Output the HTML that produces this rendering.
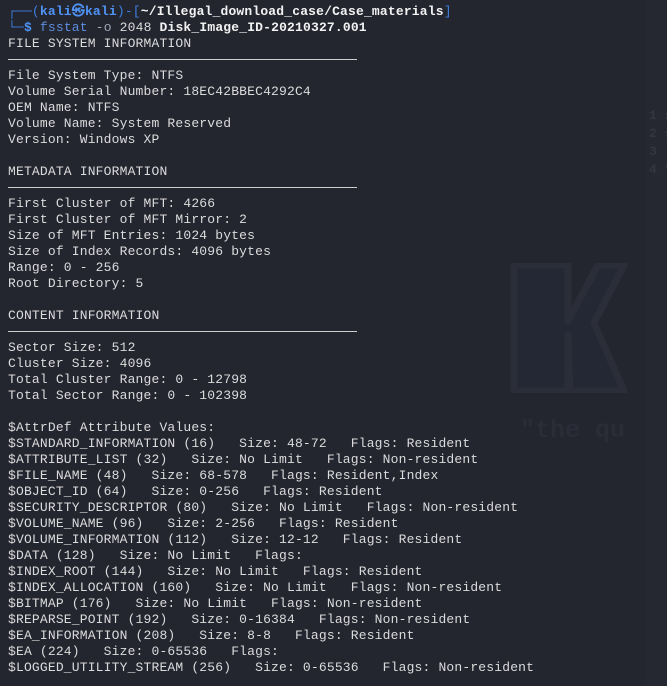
<!DOCTYPE html>
<html><head><meta charset="utf-8"><style>
html,body{margin:0;padding:0;}
body{width:667px;height:686px;background:#23252f;overflow:hidden;position:relative;font-family:"Liberation Mono","DejaVu Sans Mono",monospace;}
pre{position:absolute;left:8px;top:4px;margin:0;font:13px/16px "Liberation Mono","DejaVu Sans Mono",monospace;color:#dcdcdc;letter-spacing:0.17px;}
.b{color:#3d7fe0}.k{color:#4f93f5;font-weight:bold}.w{color:#f2f2f2;font-weight:bold}.c{color:#5c8fe0}.g{color:#9fa6b4}
.sep{position:absolute;left:8px;width:349px;height:1px;background:#cfcfcf;}
.pane{position:absolute;left:645px;top:0;width:22px;height:686px;background:#262831;}
.K{position:absolute;left:510px;top:263px;width:120px;height:130px;}
.q{position:absolute;left:520px;top:416px;font:bold 25px "Liberation Mono",monospace;color:#2a2d37;white-space:nowrap;}
.n{position:absolute;left:649px;font:bold 13px "Liberation Mono",monospace;color:#33363f;white-space:nowrap;}
</style></head><body>
<div class="pane"></div>
<svg class="K" viewBox="0 0 120 130"><path d="M4 2H58V58L88 2H114L84 60L114 128H60L58 72V128H4Z" fill="#242834" stroke="#2b2e38" stroke-width="7" stroke-linejoin="round"/></svg>
<div class="q">"the qu</div>
<div class="n" style="top:108px">1 s</div><div class="n" style="top:126px">2 s</div><div class="n" style="top:144px">3</div><div class="n" style="top:162px">4 f</div>
<pre><span class="b">┌──(</span><span class="k">kali㉿kali</span><span class="b">)-[</span><span class="w">~/Illegal_download_case/Case_materials</span><span class="b">]</span>
<span class="b">└─</span><span class="k">$</span> <span class="c">fsstat</span> <span class="g">-o</span> 2048 <span class="w">Disk_Image_ID-20210327.001</span>
FILE SYSTEM INFORMATION

File System Type: NTFS
Volume Serial Number: 18EC42BBEC4292C4
OEM Name: NTFS
Volume Name: System Reserved
Version: Windows XP

METADATA INFORMATION

First Cluster of MFT: 4266
First Cluster of MFT Mirror: 2
Size of MFT Entries: 1024 bytes
Size of Index Records: 4096 bytes
Range: 0 - 256
Root Directory: 5

CONTENT INFORMATION

Sector Size: 512
Cluster Size: 4096
Total Cluster Range: 0 - 12798
Total Sector Range: 0 - 102398

$AttrDef Attribute Values:
$STANDARD_INFORMATION (16)   Size: 48-72   Flags: Resident
$ATTRIBUTE_LIST (32)   Size: No Limit   Flags: Non-resident
$FILE_NAME (48)   Size: 68-578   Flags: Resident,Index
$OBJECT_ID (64)   Size: 0-256   Flags: Resident
$SECURITY_DESCRIPTOR (80)   Size: No Limit   Flags: Non-resident
$VOLUME_NAME (96)   Size: 2-256   Flags: Resident
$VOLUME_INFORMATION (112)   Size: 12-12   Flags: Resident
$DATA (128)   Size: No Limit   Flags:
$INDEX_ROOT (144)   Size: No Limit   Flags: Resident
$INDEX_ALLOCATION (160)   Size: No Limit   Flags: Non-resident
$BITMAP (176)   Size: No Limit   Flags: Non-resident
$REPARSE_POINT (192)   Size: 0-16384   Flags: Non-resident
$EA_INFORMATION (208)   Size: 8-8   Flags: Resident
$EA (224)   Size: 0-65536   Flags:
$LOGGED_UTILITY_STREAM (256)   Size: 0-65536   Flags: Non-resident</pre>
<div class="sep" style="top:59px"></div>
<div class="sep" style="top:187px"></div>
<div class="sep" style="top:331px"></div>
</body></html>
